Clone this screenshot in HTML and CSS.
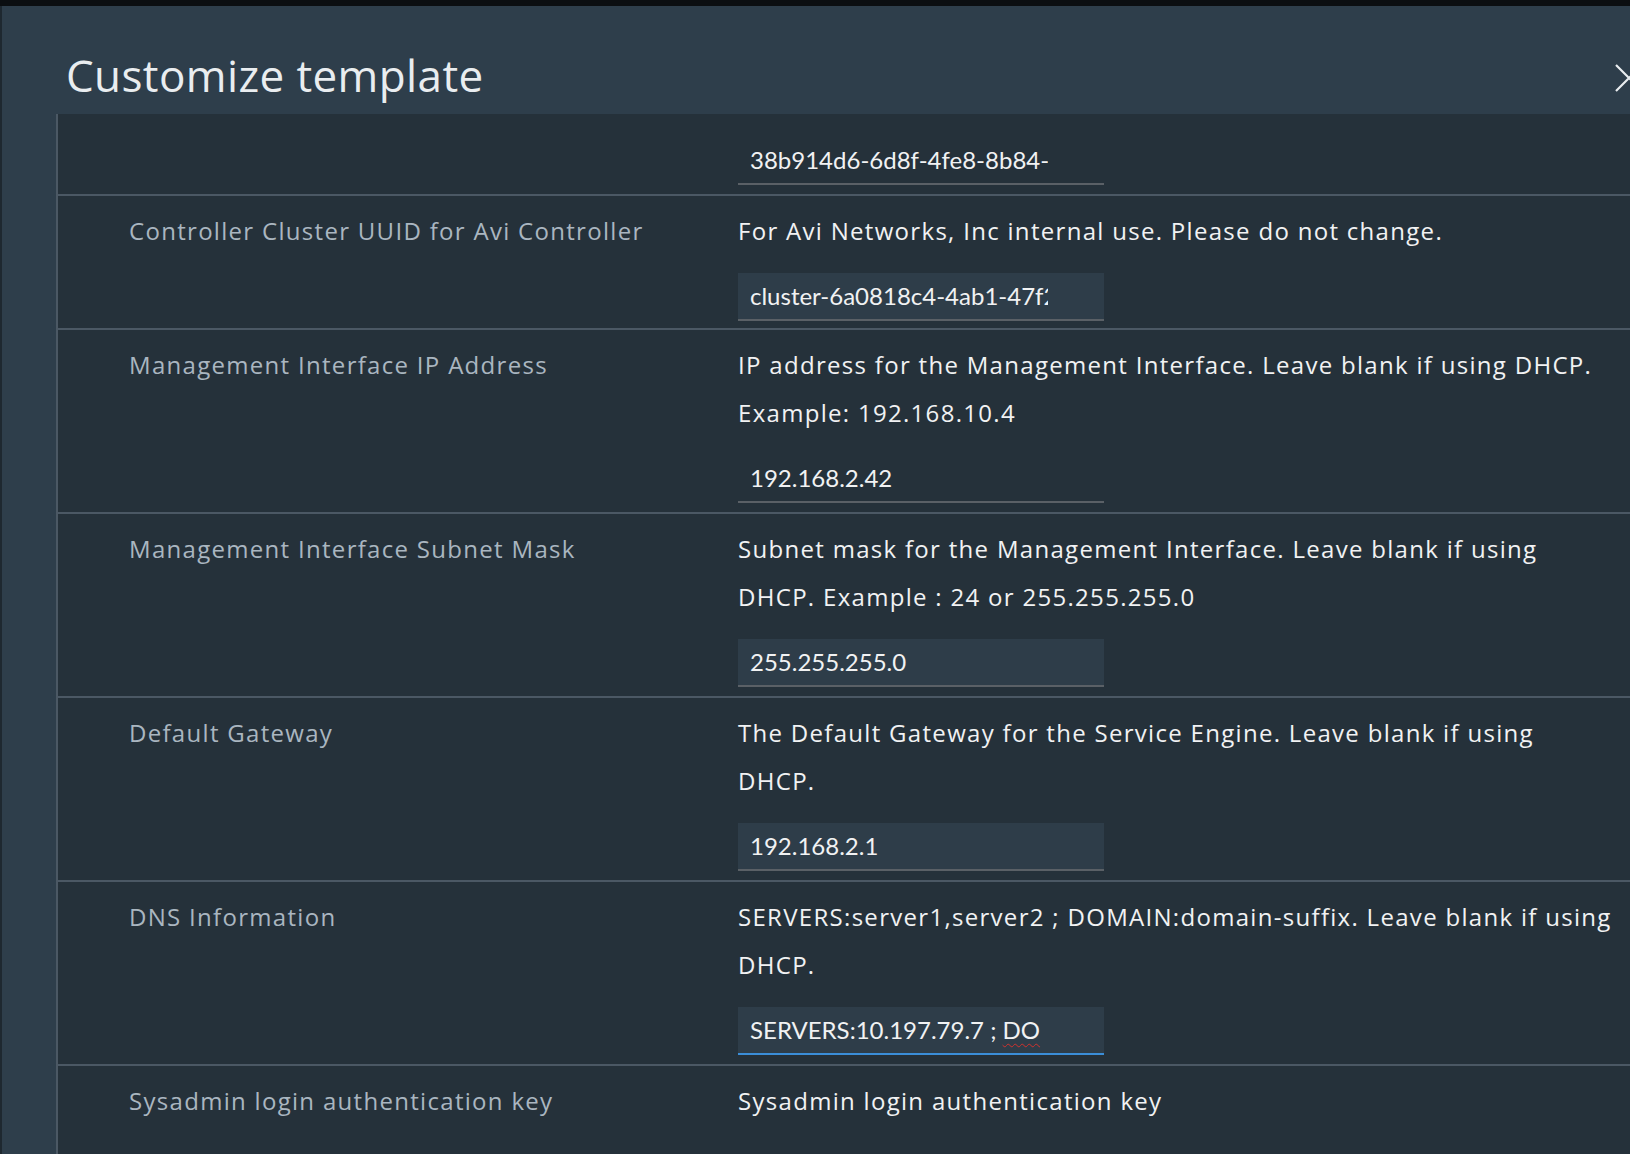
FILE: index.html
```html
<!DOCTYPE html>
<html lang="en">
<head>
<meta charset="utf-8">
<title>Customize template</title>
<link rel="stylesheet" href="styles.css">
</head>
<body>
<div class="topbar"></div>
<div class="modal">
  <header class="modal-header">
    <h1 class="modal-title">Customize template</h1>
    <button class="close" aria-label="Close">
      <svg width="28" height="28" viewBox="0 0 28 28"><path d="M1 1 L27 27 M27 1 L1 27" stroke="#e9edf0" stroke-width="2.2" fill="none"/></svg>
    </button>
  </header>
  <div class="modal-body">
    <div class="panel">
      <div class="row row--partial">
        <div class="label"></div>
        <div class="value">
          <div class="field"><span class="field-text">38b914d6-6d8f-4fe8-8b84-0c5a72e1d93f</span></div>
        </div>
      </div>
      <div class="row row--single">
        <div class="label">Controller Cluster UUID for Avi Controller</div>
        <div class="value">
          <div class="desc">For Avi Networks, Inc internal use. Please do not change.</div>
          <div class="field field--filled"><span class="field-text">cluster-6a0818c4-4ab1-47f2-9d3e-58b1c0a7e624</span></div>
        </div>
      </div>
      <div class="row">
        <div class="label">Management Interface IP Address</div>
        <div class="value">
          <div class="desc">IP address for the Management Interface. Leave blank if using DHCP.<br>Example: 192.168.10.4</div>
          <div class="field"><span class="field-text">192.168.2.42</span></div>
        </div>
      </div>
      <div class="row">
        <div class="label">Management Interface Subnet Mask</div>
        <div class="value">
          <div class="desc">Subnet mask for the Management Interface. Leave blank if using<br>DHCP. Example : 24 or 255.255.255.0</div>
          <div class="field field--filled"><span class="field-text">255.255.255.0</span></div>
        </div>
      </div>
      <div class="row">
        <div class="label">Default Gateway</div>
        <div class="value">
          <div class="desc">The Default Gateway for the Service Engine. Leave blank if using<br>DHCP.</div>
          <div class="field field--filled"><span class="field-text">192.168.2.1</span></div>
        </div>
      </div>
      <div class="row">
        <div class="label">DNS Information</div>
        <div class="value">
          <div class="desc">SERVERS:server1,server2 ; DOMAIN:domain-suffix. Leave blank if using<br>DHCP.</div>
          <div class="field field--filled field--focus"><span class="field-text">SERVERS:10.197.79.7 ; <span class="misspelled">DO</span></span></div>
        </div>
      </div>
      <div class="row">
        <div class="label">Sysadmin login authentication key</div>
        <div class="value">
          <div class="desc">Sysadmin login authentication key</div>
          <div class="field"><span class="field-text"></span></div>
        </div>
      </div>
    </div>
  </div>
</div>
</body>
</html>
```
FILE: styles.css
```css
html, body {
  margin: 0;
  padding: 0;
}
body {
  width: 1630px;
  height: 1154px;
  overflow: hidden;
  background: #0b0e11;
  font-family: "Open Sans", Lato, sans-serif;
}
.topbar {
  height: 6px;
  background: #0b0e11;
}
.modal {
  height: 1148px;
  background: #2e3e4b;
  border-left: 2px solid #1e2830;
  display: flex;
  flex-direction: column;
}
.modal-header {
  height: 108px;
  flex: none;
  display: flex;
  justify-content: space-between;
  align-items: flex-start;
  padding-left: 64px;
}
.modal-title {
  margin: 45px 0 0 0;
  font-size: 44px;
  line-height: 48px;
  font-weight: 400;
  letter-spacing: 0.4px;
  color: #e9edf0;
}
.close {
  margin: 58px -13px 0 0;
  padding: 0;
  width: 28px;
  height: 28px;
  border: 0;
  background: none;
  display: block;
}
.close svg {
  display: block;
}
.modal-body {
  flex: 1;
  padding-left: 54px;
  display: flex;
  min-height: 0;
}
.panel {
  flex: 1;
  background: #25313a;
  border-left: 2px solid #4b5864;
}
.row {
  display: grid;
  grid-template-columns: 609px 1fr;
  padding: 11px 0 9px 71px;
  border-top: 2px solid #4b5864;
}
.row--partial {
  border-top: 0;
  padding-top: 23px;
}
.row--single {
  padding-bottom: 7px;
}
.label {
  font-size: 24px;
  line-height: 48px;
  letter-spacing: 1.3px;
  color: #aab6c0;
  white-space: nowrap;
}
.value {
  display: flex;
  flex-direction: column;
  gap: 18px;
}
.desc {
  font-size: 24px;
  line-height: 48px;
  letter-spacing: 1.3px;
  color: #f1f2f3;
  white-space: nowrap;
}
.field {
  width: 366px;
  padding: 0 12px;
  box-sizing: border-box;
  height: 48px;
  border-bottom: 2px solid #5a6066;
  display: flex;
  align-items: center;
}
.field--filled {
  background: #2e3d49;
}
.field--focus {
  border-bottom-color: #3b8ed8;
}
.field-text {
  display: block;
  width: 298px;
  overflow: hidden;
  white-space: nowrap;
  font-family: Lato, "Open Sans", sans-serif;
  font-size: 24px;
  line-height: 46px;
  color: #f1f2f3;
}
.misspelled {
  text-decoration: underline wavy #d0312d;
  text-decoration-thickness: 1px;
  text-underline-offset: 4px;
}
```
